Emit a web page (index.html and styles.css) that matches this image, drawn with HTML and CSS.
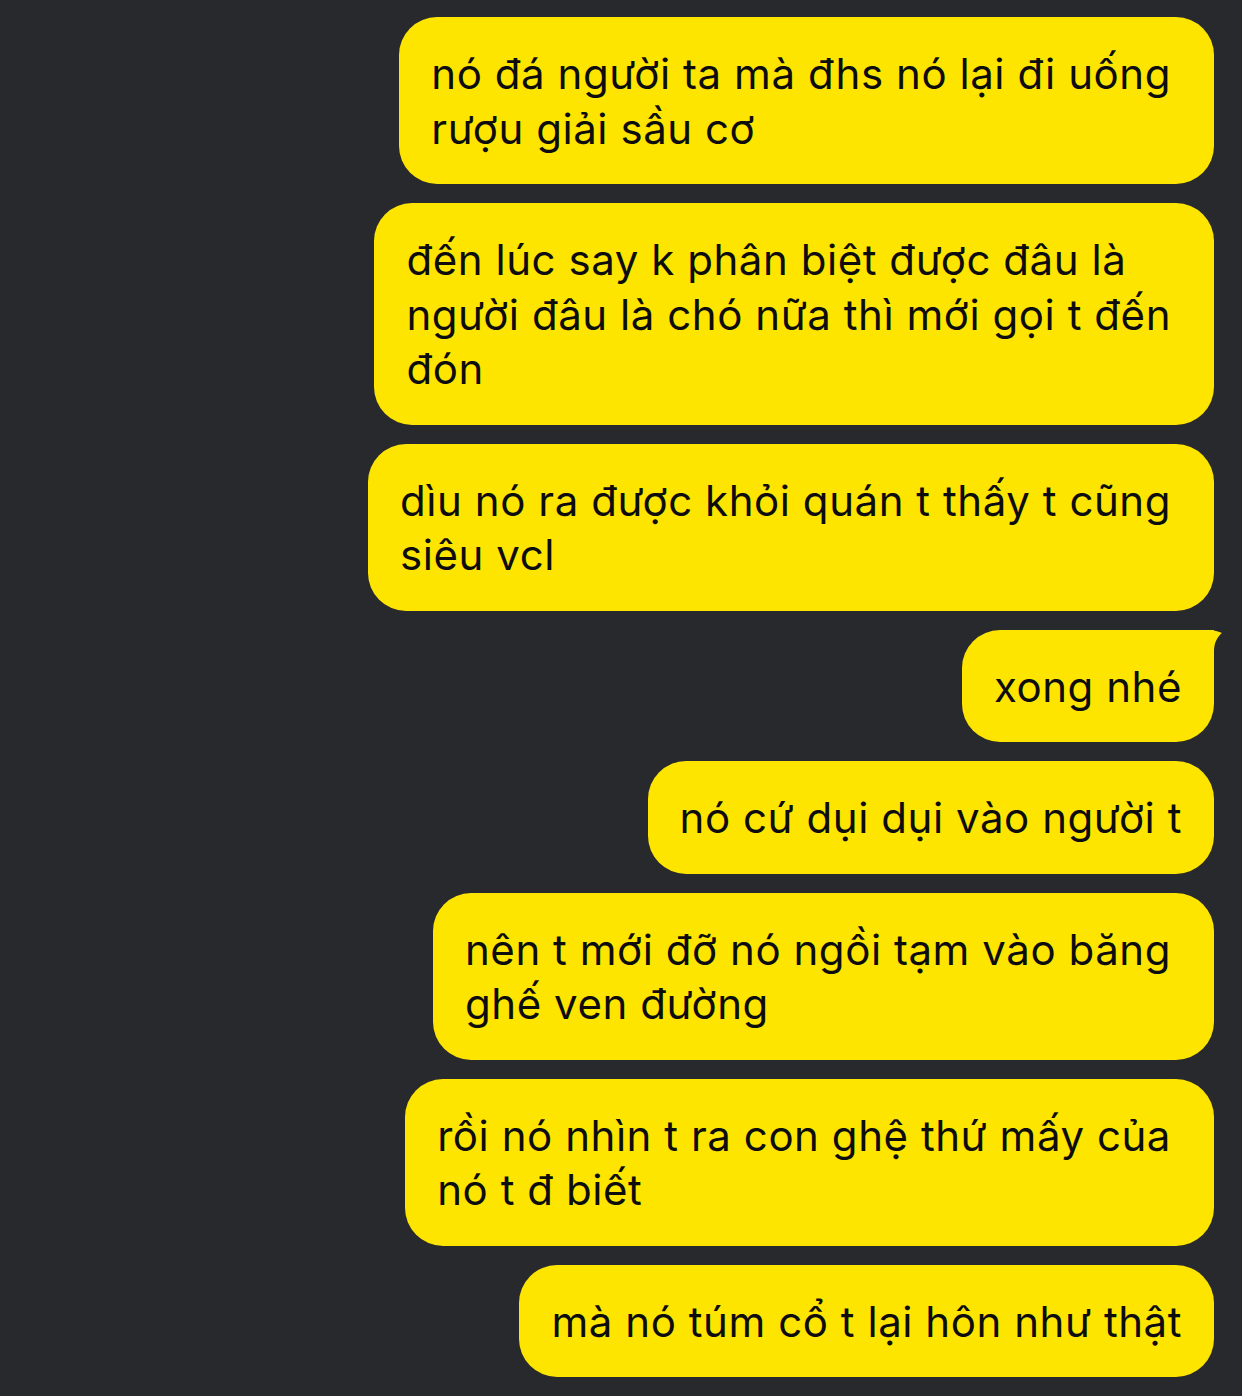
FILE: index.html
```html
<!DOCTYPE html>
<html lang="vi">
<head>
  <meta charset="UTF-8">
  <meta name="viewport" content="width=device-width, initial-scale=1.0">
  <title>Tin nhắn</title>
  <link rel="stylesheet" href="styles.css">
</head>
<body>
  <div class="chat">
    <div class="bubble multi">nó đá người ta mà đhs nó lại đi uống<br>rượu giải sầu cơ</div>
    <div class="bubble multi">đến lúc say k phân biệt được đâu là<br>người đâu là chó nữa thì mới gọi t đến<br>đón</div>
    <div class="bubble multi">dìu nó ra được khỏi quán t thấy t cũng<br>siêu vcl</div>
    <div class="bubble tail">xong nhé
      <svg class="tail-icon" width="34" height="40" viewBox="0 0 34 40">
        <path d="M0 0 H16 C22 0 27 0 34 3 C29 7 26 13 26 22 V40 H0 Z" fill="#fee500"/>
      </svg>
    </div>
    <div class="bubble">nó cứ dụi dụi vào người t</div>
    <div class="bubble multi">nên t mới đỡ nó ngồi tạm vào băng<br>ghế ven đường</div>
    <div class="bubble multi">rồi nó nhìn t ra con ghệ thứ mấy của<br>nó t đ biết</div>
    <div class="bubble">mà nó túm cổ t lại hôn như thật</div>
  </div>
</body>
</html>
```

FILE: styles.css
```css
body {
  margin: 0;
  padding: 0;
  background-color: #28292c;
  font-family: Inter, "Noto Sans", sans-serif;
}
.chat {
  display: flex;
  flex-direction: column;
  align-items: flex-end;
  gap: 19px;
  padding: 17px 28px 18px 0;
}
.bubble {
  position: relative;
  background-color: #fee500;
  color: #0d0d0d;
  font-size: 42px;
  letter-spacing: 0.55px;
  line-height: 54.5px;
  padding: 30px 32px 28px 32px;
  border-radius: 38px;
  white-space: nowrap;
}
/* wrapped messages keep some room on the right */
.bubble.multi {
  padding-right: 43px;
}
.bubble.tail {
  border-top-right-radius: 0;
}
.tail-icon {
  position: absolute;
  top: 0;
  right: -8px;
  overflow: visible;
}
```
